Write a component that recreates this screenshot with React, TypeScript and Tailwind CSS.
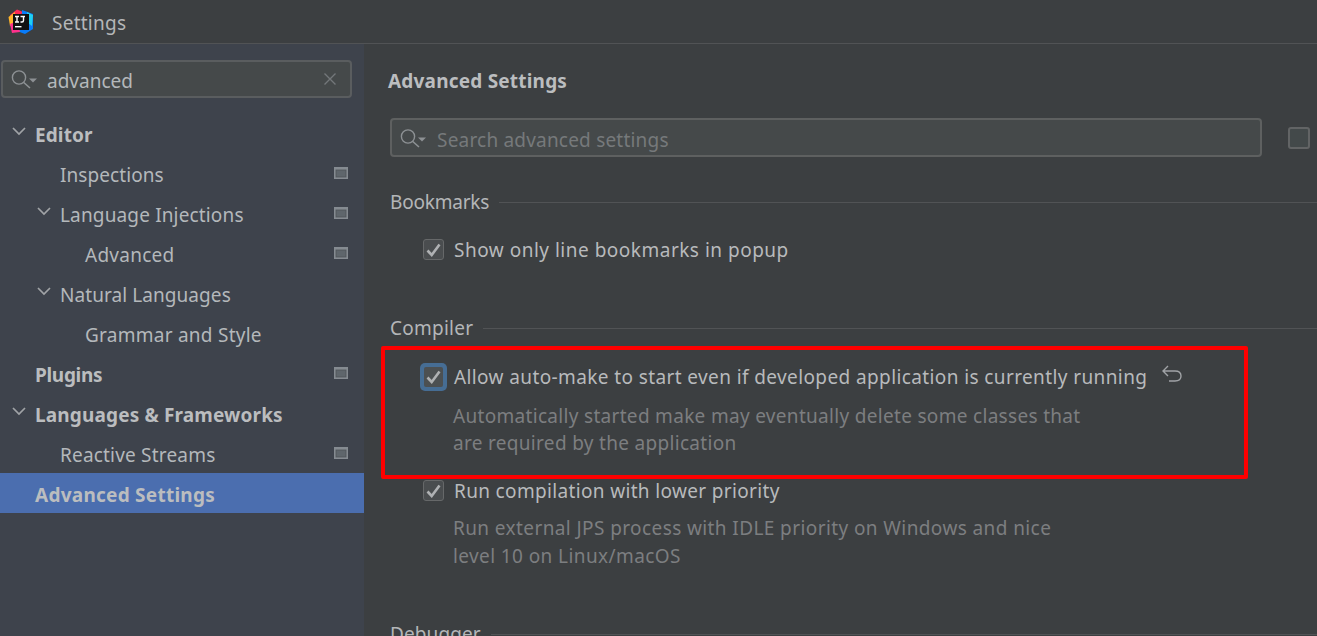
import React from "react";

const font = { fontFamily: '"Noto Sans", "Open Sans", sans-serif' };

function Chevron({ className = "" }: { className?: string }) {
  return (
    <svg width="14" height="9" viewBox="0 0 14 9" fill="none" className={className}>
      <path d="M1 1 L7 7 L13 1" stroke="#a0a3a6" strokeWidth="1.7" />
    </svg>
  );
}

function ProjectIcon() {
  return (
    <svg width="14" height="12" viewBox="0 0 14 12" className="shrink-0">
      <rect x="0" y="0" width="14" height="12" fill="#858b91" />
      <rect x="2" y="3" width="10" height="7" fill="#5f666c" stroke="#4f5459" strokeWidth="0.8" />
    </svg>
  );
}

function SearchIcon() {
  return (
    <svg width="27" height="22" viewBox="0 0 27 22" fill="none" className="shrink-0">
      <circle cx="8" cy="9.5" r="6.6" stroke="#8d9194" strokeWidth="1.4" />
      <path d="M12.8 14.5 L19 20" stroke="#8d9194" strokeWidth="1.6" />
      <path d="M18 10.5 L26 10.5 L22 14.5 Z" fill="#8d9194" />
    </svg>
  );
}

function Check({ focused = false }: { focused?: boolean }) {
  return (
    <div
      className={
        focused
          ? "w-[27px] h-[28px] rounded-[5px] bg-[#466d94] flex items-center justify-center shrink-0"
          : "w-[27px] h-[27px] flex items-center justify-center shrink-0"
      }
    >
      <div
        className={
          focused
            ? "w-[19px] h-[20px] rounded-[2px] bg-[#4c5052] flex items-center justify-center"
            : "w-[21px] h-[21px] rounded-[3px] bg-[#4a4d4f] border border-[#666869] flex items-center justify-center"
        }
      >
        <svg width="15" height="14" viewBox="0 0 15 14" fill="none">
          <path d="M1.5 7.5 L5.7 12 L13.5 1.5" stroke="#afb1b3" strokeWidth="2.6" />
        </svg>
      </div>
    </div>
  );
}

function TreeRow({
  label,
  indent,
  chevron,
  bold,
  icon,
  selected,
  tracking,
}: {
  label: string;
  indent: number;
  chevron?: boolean;
  bold?: boolean;
  icon?: boolean;
  selected?: boolean;
  tracking: string;
}) {
  const rowBg = selected ? "bg-[#4b6eaf]" : "";
  const pad = indent === 35 ? "pl-[35px]" : indent === 60 ? "pl-[60px]" : "pl-[85px]";
  const color = bold ? "font-bold text-[#bbbdbf]" : "text-[#b4b8bb]";
  return (
    <div className={`h-10 flex items-center pr-[16px] ${rowBg}`}>
      <div className={`relative flex-1 min-w-0 flex items-center pt-[4px] ${pad}`}>
        {chevron && (
          <Chevron className={indent === 35 ? "absolute left-[12px] top-[9px]" : "absolute left-[37px] top-[9px]"} />
        )}
        <span className={`text-[19px] leading-[26px] ${color} ${tracking}`}>{label}</span>
      </div>
      {icon && <ProjectIcon />}
    </div>
  );
}

function SectionHead({ label, tracking }: { label: string; tracking: string }) {
  return (
    <div className="flex items-center gap-[10px] h-[26px]">
      <span className={`text-[19px] leading-[26px] text-[#b4b6b8] ${tracking}`}>{label}</span>
      <div className="flex-1 h-px bg-[#515355]" />
    </div>
  );
}

export default function App() {
  return (
    <div className="w-[1317px] h-[636px] overflow-hidden flex flex-col bg-[#3c3f41]" style={font}>
      <div className="h-[44px] shrink-0 flex items-center border-b border-[#515355] bg-[#3c3f41] pl-[8px] gap-[18px]">
        <svg width="26" height="26" viewBox="0 0 26 26" className="shrink-0 mt-[1px]">
          <path d="M2 6 L9 0.5 L15 3 L4 17 Z" fill="#fe2857" />
          <path d="M0.5 8 L7 3 L6 14 L2 17 Z" fill="#ffb52b" />
          <path d="M14 1 L25 5 L25 20 L17 25 L9 22 L14 10 Z" fill="#087cfa" />
          <path d="M19 3 L25 6 L24 17 L20 14 Z" fill="#21d0f0" />
          <path d="M2 15 L10 12 L12 23 L4 24 Z" fill="#ff318c" />
          <rect x="5" y="5" width="16" height="16" fill="#111" />
          <path d="M7 7.5 H11 M9 7.5 V13 M7 13 H11 M12.5 7.5 H17 M15.5 7.5 V11.5 Q15.5 13 14 13 H12.5" stroke="#fff" strokeWidth="1.4" fill="none" />
          <rect x="7" y="17" width="6.5" height="1.4" fill="#fff" />
        </svg>
        <span className="pt-[2px] text-[19px] leading-[26px] text-[#b4b6b8] tracking-[0.25px]">Settings</span>
      </div>
      <div className="flex-1 flex min-h-0">
        <aside className="w-[364px] shrink-0 bg-[#3e434c] flex flex-col pt-[16px]">
          <div className="ml-[1px] mr-[12px] h-[38px] rounded-[4px] border-2 border-[#5a5d5f] bg-[#45494a] flex items-center pl-[8px] pr-[13px]">
            <SearchIcon />
            <span className="ml-[9px] pt-[4px] flex-1 text-[19px] leading-[26px] text-[#b4b8bb] tracking-[0px]">advanced</span>
            <svg width="14" height="14" viewBox="0 0 14 14" fill="none">
              <path d="M1.5 1.5 L12.5 12.5 M12.5 1.5 L1.5 12.5" stroke="#73777a" strokeWidth="1.4" />
            </svg>
          </div>
          <div className="mt-[15px]">
            <TreeRow label="Editor" indent={35} chevron bold tracking="tracking-[0.1px]" />
            <TreeRow label="Inspections" indent={60} icon tracking="tracking-[0.07px]" />
            <TreeRow label="Language Injections" indent={60} chevron icon tracking="tracking-[0.15px]" />
            <TreeRow label="Advanced" indent={85} icon tracking="tracking-[0.25px]" />
            <TreeRow label="Natural Languages" indent={60} chevron tracking="tracking-[0.07px]" />
            <TreeRow label="Grammar and Style" indent={85} tracking="tracking-[0.25px]" />
            <TreeRow label="Plugins" indent={35} bold icon tracking="tracking-[-0.3px]" />
            <TreeRow label="Languages & Frameworks" indent={35} chevron bold tracking="tracking-[0.15px]" />
            <TreeRow label="Reactive Streams" indent={60} icon tracking="tracking-[0.19px]" />
            <TreeRow label="Advanced Settings" indent={35} bold selected tracking="tracking-[0.25px]" />
          </div>
        </aside>
        <main className="relative flex-1 min-w-0 overflow-hidden pl-[24px] pt-[24px]">
          <h1 className="text-[19px] leading-[26px] font-bold text-[#bbbdbf] tracking-[0.2px]">Advanced Settings</h1>
          <div className="mt-[24px] flex items-center">
            <div className="w-[872px] h-[39px] ml-[2px] rounded-[4px] border-2 border-[#5e6060] bg-[#45494a] flex items-center pl-[8px]">
              <SearchIcon />
              <span className="ml-[10px] pt-[4px] text-[19px] leading-[26px] text-[#76797b] tracking-[0.2px]">Search advanced settings</span>
            </div>
            <div className="ml-[26px] w-[22px] h-[22px] rounded-[3px] border-2 border-[#626465] bg-[#43494a] shrink-0" />
          </div>

          <div className="mt-[32px] pl-[2px]">
            <SectionHead label="Bookmarks" tracking="tracking-[-0.2px]" />
            <div className="mt-[21px] ml-[30px] flex items-center gap-[7px] h-[27px]">
              <Check />
              <span className="text-[19px] leading-[26px] text-[#b8babc] tracking-[0.5px]">Show only line bookmarks in popup</span>
            </div>

            <div className="mt-[52px]">
              <SectionHead label="Compiler" tracking="tracking-[0.25px]" />
            </div>
            <div className="mt-[22px] ml-[30px] flex items-center gap-[7px] h-[27px]">
              <Check focused />
              <span className="text-[19px] leading-[26px] text-[#b8babc] tracking-[0.39px] whitespace-nowrap">
                Allow auto-make to start even if developed application is currently running
              </span>
              <svg width="22" height="20" viewBox="0 0 22 20" fill="none" className="ml-[7px] -mt-[5px]">
                <path d="M7 2 L2 7 L7 12 M2 7 H14 Q20 7 20 12 Q20 17 14 17 H8" stroke="#a0a3a6" strokeWidth="1.4" />
              </svg>
            </div>
            <p className="mt-[13px] ml-[63px] text-[19px] leading-[27px] text-[#7c7e80] tracking-[0.31px] w-[680px]">
              Automatically started make may eventually delete some classes that
              <br />
              are required by the application
            </p>
            <div className="mt-[20px] ml-[30px] flex items-center gap-[7px] h-[27px]">
              <Check />
              <span className="text-[19px] leading-[26px] text-[#b8babc] tracking-[0.34px]">Run compilation with lower priority</span>
            </div>
            <p className="mt-[10px] ml-[63px] text-[19px] leading-[28px] text-[#7c7e80] tracking-[0.4px] w-[680px]">
              Run external JPS process with IDLE priority on Windows and nice
              <br />
              level 10 on Linux/macOS
            </p>
            <div className="mt-[51px]">
              <SectionHead label="Debugger" tracking="tracking-[0.1px]" />
            </div>
          </div>

          <div className="absolute left-[17px] top-[302px] w-[867px] h-[133px] border-[4px] border-[#ff0000] rounded-[2px]" />
        </main>
      </div>
    </div>
  );
}
